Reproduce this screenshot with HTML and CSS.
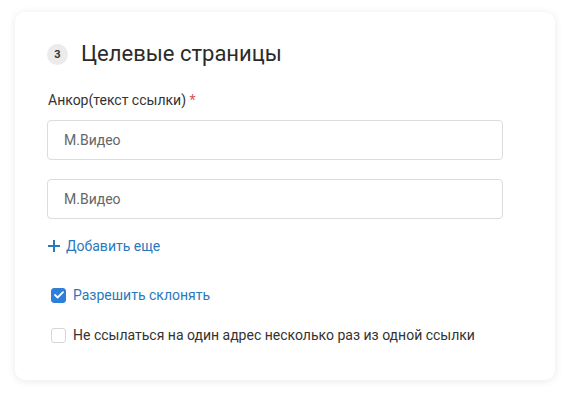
FILE: index.html
```html
<!DOCTYPE html>
<html>
<head>
  <title>Целевые страницы</title>
  <meta name="viewport" content="width=device-width, initial-scale=1">
  <link rel="stylesheet" href="styles.css">
</head>
<body>
  <div class="card">
    <div class="card-title">
      <span class="step">3</span>
      <h2>Целевые страницы</h2>
    </div>

    <div class="field-label">Анкор(текст ссылки) <span class="req">*</span></div>
    <div class="inputs">
      <input class="text-input" type="text" value="М.Видео">
      <input class="text-input" type="text" value="М.Видео">
    </div>

    <a class="add-more" href="#">
      <svg width="12" height="12" viewBox="0 0 12 12"><path d="M6 0v12M0 6h12" stroke="#2a79bd" stroke-width="2"/></svg>
      Добавить еще
    </a>

    <label class="check checked">
      <span class="box">
        <svg width="10" height="8" viewBox="0 0 10 8"><path d="M1 4l2.6 2.5L9 1.2" fill="none" stroke="#fff" stroke-width="1.8" stroke-linecap="round" stroke-linejoin="round"/></svg>
      </span>
      Разрешить склонять
    </label>

    <label class="check">
      <span class="box"></span>
      Не ссылаться на один адрес несколько раз из одной ссылки
    </label>
  </div>
</body>
</html>
```

FILE: styles.css
```css
* {
  box-sizing: border-box;
  margin: 0;
  padding: 0;
}

body {
  font-family: Roboto, "Noto Sans", Arial, sans-serif;
  background-color: #fff;
  padding: 12px 15px;
}

.card {
  width: 540px;
  height: 368px;
  background-color: #fff;
  border-radius: 10px;
  box-shadow: 0 1px 8px rgba(0, 0, 0, 0.09);
  padding: 31px 33px 0 32px;
}

.card-title {
  display: flex;
  align-items: center;
  gap: 13px;
}

.step {
  width: 21px;
  height: 21px;
  border-radius: 50%;
  background-color: #ebebeb;
  color: #333;
  font-size: 11px;
  font-weight: bold;
  display: flex;
  align-items: center;
  justify-content: center;
}

.card-title h2 {
  font-size: 22px;
  font-weight: normal;
  color: #2b2b2b;
  line-height: 22px;
}

.field-label {
  margin-top: 27px;
  font-size: 14px;
  color: #333;
  line-height: 16px;
  padding-left: 1px;
}

.req {
  color: #d9534f;
}

.inputs {
  display: flex;
  flex-direction: column;
  gap: 19px;
  margin-top: 12px;
}

.text-input {
  width: 456px;
  height: 40px;
  border: 1px solid #dcdcdc;
  border-radius: 4px;
  padding: 0 16px;
  font-family: inherit;
  font-size: 14px;
  color: #666;
  background: #fff;
}

.add-more {
  display: flex;
  align-items: center;
  gap: 6px;
  margin-top: 19px;
  color: #2a79bd;
  text-decoration: none;
  font-size: 14px;
  line-height: 16px;
  padding-left: 1px;
}

.check {
  display: flex;
  align-items: center;
  gap: 7px;
  font-size: 14px;
  line-height: 16px;
  color: #333;
  padding-left: 4px;
}

.check.checked {
  margin-top: 33px;
  color: #2a79bd;
}

.check + .check {
  margin-top: 24px;
}

.box {
  width: 15px;
  height: 15px;
  border: 1px solid #d6d6d6;
  border-radius: 3px;
  background: #fff;
  display: flex;
  align-items: center;
  justify-content: center;
}

.checked .box {
  background-color: #2f7fd8;
  border-color: #2f7fd8;
}
```
